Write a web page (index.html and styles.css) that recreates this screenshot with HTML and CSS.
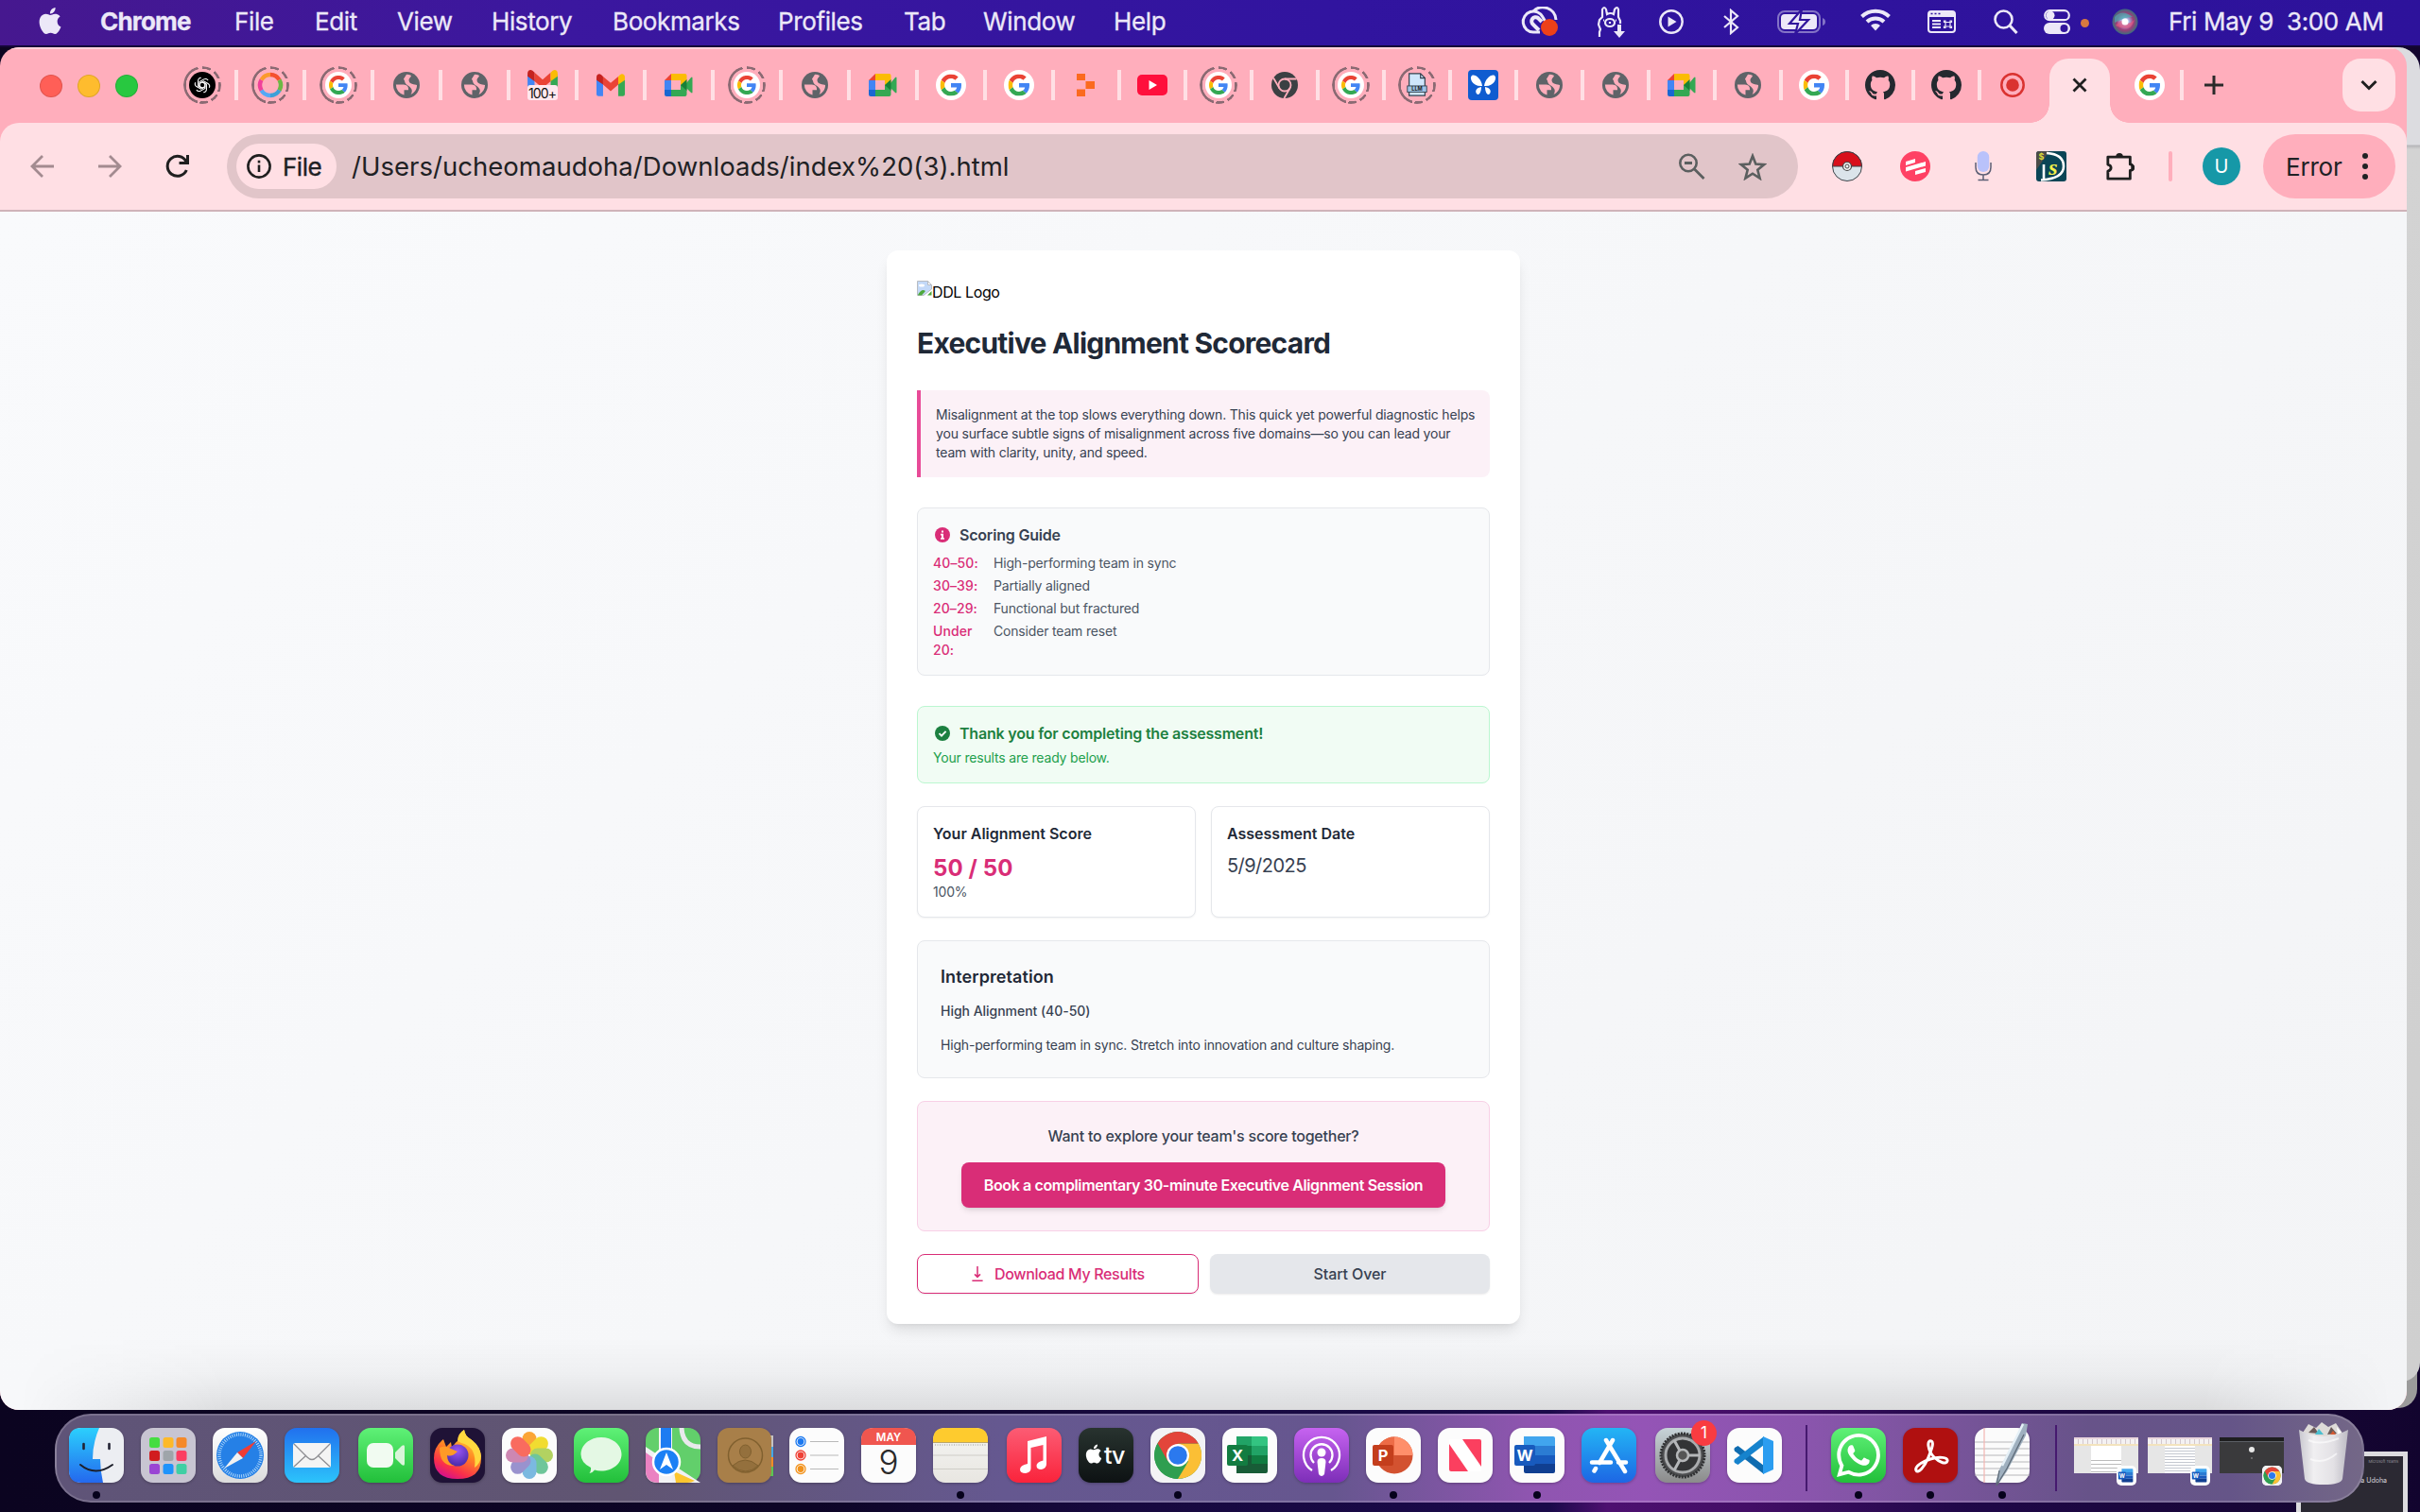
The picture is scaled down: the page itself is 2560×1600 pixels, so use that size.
FILE: index.html
```html
<!DOCTYPE html>
<html lang="en">
<head>
<meta charset="utf-8">
<title>Executive Alignment Scorecard</title>
<link rel="stylesheet" href="styles.css">
</head>
<body>
<svg class="sprite" aria-hidden="true">
  <defs>
    <linearGradient id="gr-blue" x1="0" y1="0" x2="0" y2="1"><stop offset="0" stop-color="#2bd0fd"/><stop offset="1" stop-color="#2468ee"/></linearGradient>
    <linearGradient id="gr-white" x1="0" y1="0" x2="0" y2="1"><stop offset="0" stop-color="#fff"/><stop offset="1" stop-color="#dcdcdc"/></linearGradient>
    <linearGradient id="gr-fox" x1=".8" y1="0" x2=".3" y2="1"><stop offset="0" stop-color="#ffe14d"/><stop offset=".45" stop-color="#ff8a22"/><stop offset=".8" stop-color="#fa2f4b"/><stop offset="1" stop-color="#d6118c"/></linearGradient>
    <radialGradient id="gr-violet" cx=".5" cy=".3" r=".7"><stop offset="0" stop-color="#9a55f5"/><stop offset="1" stop-color="#4a2aa8"/></radialGradient>
    <linearGradient id="gr-can" x1="0" y1="0" x2="1" y2="0"><stop offset="0" stop-color="#c9c8cf"/><stop offset=".3" stop-color="#f0eff1"/><stop offset=".7" stop-color="#e3e1e5"/><stop offset="1" stop-color="#bdbbc4"/></linearGradient>
    <radialGradient id="gr-siri"><stop offset="0" stop-color="#fff"/><stop offset=".3" stop-color="#a9b8e8"/><stop offset=".65" stop-color="#a03d78"/><stop offset="1" stop-color="#3b6f7d"/></radialGradient>
  </defs>

  <symbol id="apple" viewBox="0 0 24 24"><path fill="currentColor" d="M12.152 6.896c-.948 0-2.415-1.078-3.96-1.04-2.04.027-3.91 1.183-4.961 3.014-2.117 3.675-.546 9.103 1.519 12.09 1.013 1.454 2.208 3.09 3.792 3.039 1.52-.065 2.09-.987 3.935-.987 1.831 0 2.35.987 3.96.948 1.637-.026 2.676-1.48 3.676-2.948 1.156-1.688 1.636-3.325 1.662-3.415-.039-.013-3.182-1.221-3.22-4.857-.026-3.04 2.48-4.494 2.597-4.559-1.429-2.09-3.623-2.324-4.39-2.376-2-.156-3.675 1.09-4.61 1.09zM15.53 3.83c.843-1.012 1.4-2.427 1.245-3.83-1.207.052-2.662.805-3.532 1.818-.78.896-1.454 2.338-1.273 3.714 1.338.104 2.715-.688 3.559-1.701"/></symbol>
  <symbol id="m-cloud" viewBox="0 0 40 32"><g fill="none" stroke="currentColor" stroke-width="3"><path d="M21 27H14a11 11 0 1 1 10-16l4 7"/><path d="M14 5a14 14 0 0 1 24 9"/><path d="M20 25l-6-6a4 4 0 0 1 5-7l4 4" stroke-width="4"/></g><circle cx="31" cy="22" r="9" fill="#ee4019"/></symbol>
  <symbol id="m-llama" viewBox="0 0 30 34"><g fill="none" stroke="currentColor" stroke-width="2.2"><path d="M3 33v-5l1-3-2-5 1-5 3-3V4q2-4 4 0l1 5q4-2 7 0l1-5q3-4 4 0v8l2 4v3"/><ellipse cx="14" cy="18" rx="5" ry="4"/><path d="M14 17v2M7 15.500h1M20 15.500h1"/></g><path fill="currentColor" d="M22 20h4v7h4l-6 7-6-7h4z"/></symbol>
  <symbol id="m-play" viewBox="0 0 26 26"><circle cx="13" cy="13" r="11.700" fill="none" stroke="currentColor" stroke-width="2.500"/><path fill="currentColor" d="M9.500 7.500v11l9-5.500z"/></symbol>
  <symbol id="m-bt" viewBox="0 0 18 28"><path d="M2 8l14 12-7 6V2l7 6L2 20" fill="none" stroke="currentColor" stroke-width="2.200"/></symbol>
  <symbol id="m-batt" viewBox="0 0 52 26"><rect x="1" y="2" width="44" height="22" rx="7" fill="none" stroke="currentColor" stroke-opacity=".45" stroke-width="2"/><rect x="4" y="5" width="38" height="16" rx="4" fill="currentColor"/><path d="M48 9q3 1 3 4t-3 4z" fill="currentColor" opacity=".45"/><path d="M26 0L13 15h9l-3 11L33 11h-9z" fill="currentColor" stroke="#30149c" stroke-width="2.200"/></symbol>
  <symbol id="m-wifi" viewBox="0 0 32 25"><g fill="none" stroke="currentColor" stroke-width="4"><path d="M1.500 9.500a21 21 0 0 1 29 0"/><path d="M7 15a13 13 0 0 1 18 0"/></g><path fill="currentColor" d="M11 19a7 7 0 0 1 10 0l-5 5.500z"/></symbol>
  <symbol id="m-app" viewBox="0 0 30 24"><rect x="1" y="1" width="28" height="22" rx="3" fill="none" stroke="currentColor" stroke-width="2"/><path fill="currentColor" d="M1 2h28v5H1z"/><path d="M3.500 3.500h2M7.500 3.500h2M11.500 3.500h2" stroke="#30149c" stroke-width="1.600"/><path d="M5 11h9M5 14.500h9M5 18h9" stroke="currentColor" stroke-width="1.800"/><path d="M19 12.500h5v4.500h-5zM19 12.500h-1.500v-1.500h1.500zM24 12.500v-1.500h1.500v1.500zM19 17v1.500h-1.500V17zM24 17h1.500v1.500H24z" fill="none" stroke="currentColor" stroke-width="1.200"/></symbol>
  <symbol id="m-search" viewBox="0 0 26 26"><circle cx="10.500" cy="10.500" r="9" fill="none" stroke="currentColor" stroke-width="2.600"/><path d="M17 17l7.500 8" stroke="currentColor" stroke-width="3"/></symbol>
  <symbol id="m-toggles" viewBox="0 0 28 26"><rect x="1.200" y="1.200" width="25.600" height="10" rx="5" fill="none" stroke="currentColor" stroke-width="2.200"/><circle cx="7" cy="6.200" r="4.500" fill="currentColor"/><rect y="14" width="28" height="12" rx="6" fill="currentColor"/><circle cx="21.500" cy="20" r="4" fill="#30149c"/></symbol>
  <symbol id="m-siri" viewBox="0 0 28 28"><circle cx="14" cy="14" r="13.500" fill="url(#gr-siri)"/><path d="M3 9q8-9 19 0-9 0-19 6z" fill="#46aeb0" opacity=".7"/><path d="M4 18q7-8 10-4t10-2q-3 9-9 9t-11-3z" fill="#e9557e" opacity=".65"/><circle cx="14" cy="14" r="3.500" fill="#fff"/></symbol>

  <symbol id="f-globe" viewBox="0 0 28 28"><circle cx="14" cy="14" r="14" fill="#5f6368"/><g fill="#ffaebc"><path d="M2.900 13.500H11q5 .3 5 4.500v1.200h-4.500v5.400A11 11 0 0 1 2.900 13.500z"/><path d="M14 2.800q3 0 5 1.200c-.3 2-2.500 2.800-2.500 4.600 0 3.800 3 4.600 8.500 5.400.3 4.500-3 8.500-6.500 10 1-1.800 1.800-4 .8-5.800-1.500-2.500-2.800-3-5.600-5-2-1.500-1-4-2.800-5.400z"/></g></symbol>
  <symbol id="f-g" viewBox="0 0 48 48"><path fill="#ea4335" d="M24 9.500c3.540 0 6.710 1.220 9.210 3.600l6.850-6.850C35.900 2.380 30.470 0 24 0 14.620 0 6.510 5.380 2.560 13.220l7.980 6.190C12.430 13.720 17.740 9.500 24 9.500z"/><path fill="#4285f4" d="M46.980 24.550c0-1.570-.15-3.090-.38-4.550H24v9.020h12.940c-.58 2.960-2.260 5.480-4.780 7.180l7.730 6c4.510-4.180 7.090-10.360 7.090-17.650z"/><path fill="#fbbc05" d="M10.530 28.590c-.48-1.450-.76-2.990-.76-4.590s.27-3.140.76-4.590l-7.980-6.190C.92 16.460 0 20.120 0 24c0 3.880.92 7.540 2.560 10.780l7.970-6.190z"/><path fill="#34a853" d="M24 48c6.480 0 11.930-2.130 15.890-5.810l-7.730-6c-2.150 1.450-4.920 2.300-8.160 2.300-6.260 0-11.570-4.220-13.470-9.910l-7.980 6.190C6.510 42.620 14.620 48 24 48z"/></symbol>
  <symbol id="f-google" viewBox="0 0 32 32"><circle cx="16" cy="16" r="16" fill="#fff"/><use href="#f-g" x="4.500" y="4.500" width="23" height="23"/></symbol>
  <symbol id="f-gpt" viewBox="0 0 28 28"><circle cx="14" cy="14" r="14" fill="#000"/><g fill="none" stroke="#fff" stroke-width="1.100"><path id="petal" d="M14 10.800l2.900 1.600v5l-4.600 2.700a3.200 3.200 0 0 1-4.400-1.200"/><use href="#petal" transform="rotate(60 14 14)"/><use href="#petal" transform="rotate(120 14 14)"/><use href="#petal" transform="rotate(180 14 14)"/><use href="#petal" transform="rotate(240 14 14)"/><use href="#petal" transform="rotate(300 14 14)"/></g></symbol>
  <symbol id="f-ring" viewBox="0 0 28 28"><g fill="none" stroke-width="4.500"><path d="M14 3a11 11 0 0 1 9.500 5.500" stroke="#f5502e"/><path d="M23.500 8.500a11 11 0 0 1 0 11" stroke="#6cb845"/><path d="M23.500 19.500A11 11 0 0 1 14 25" stroke="#3ea0d8"/><path d="M14 25a11 11 0 0 1-9.500-5.500" stroke="#55a8f5"/><path d="M4.500 19.500a11 11 0 0 1 0-11" stroke="#f0409a"/><path d="M4.500 8.500A11 11 0 0 1 14 3" stroke="#fb9a2c"/></g></symbol>
  <symbol id="f-gmail" viewBox="0 0 28 22"><path fill="#4285f4" d="M0 4l6.500 4.500V22H2q-2 0-2-2z"/><path fill="#34a853" d="M28 4l-6.500 4.500V22H26q2 0 2-2z"/><path fill="#ea4335" d="M6.500 2.500L14 9l7.500-6.500v8L14 17l-7.500-6.500z"/><path fill="#c5221f" d="M0 3.500Q0 0 3 0q1.500 0 3.500 2.500v8L0 6z"/><path fill="#fbbc04" d="M28 3.500Q28 0 25 0q-1.500 0-3.500 2.500v8L28 6z"/></symbol>
  <symbol id="f-meet" viewBox="0 0 30 24"><path fill="#ea4335" d="M7 0v7H0z"/><path fill="#fbbc04" d="M7 0h14.500q2 0 2 2v8L17 12V7H7z"/><path fill="#4285f4" d="M0 7h7v10H0z"/><path fill="#1967d2" d="M0 17h7v7H2q-2 0-2-2z"/><path fill="#34a853" d="M7 17h10v-5l6.500-2v12q0 2-2 2H7zM23 10l5-6q1.500-1 1.500.5v15q0 1.500-1.500.5l-5-5z"/><path fill="#188038" d="M17 12l6.500-6v12z"/></symbol>
  <symbol id="f-blocks" viewBox="0 0 20 24"><path fill="#fb6a1f" d="M0 0h9v7H0zM9.500 8H19v8H9.500zM0 16.500h9V24H0z"/></symbol>
  <symbol id="f-yt" viewBox="0 0 32 22"><rect width="32" height="22" rx="5" fill="#ff0f3c"/><path fill="#fff" d="M12.500 6v10l8.500-5z"/></symbol>
  <symbol id="f-chromium" viewBox="0 0 28 28"><circle cx="14" cy="14" r="14" fill="#3c4043"/><g stroke="#ffaebc" stroke-width="1.800" fill="none"><circle cx="14" cy="14" r="6.500"/><path d="M14 7.500h12.500M8.400 17.300L2.100 6.500M19.600 17.300L13.400 28"/></g></symbol>
  <symbol id="f-llm" viewBox="0 0 24 28"><path d="M3 1h13l5 5v20H3z" fill="#cfe6fb" stroke="#33414e" stroke-width="1.300"/><path d="M16 1v5h5" fill="none" stroke="#33414e" stroke-width="1.300"/><rect x="1" y="15" width="22" height="7" fill="#9fc4e6" stroke="#33414e"/></symbol>
  <symbol id="f-fly" viewBox="0 0 32 32"><rect width="32" height="32" rx="4" fill="#0f5cd0"/><g fill="#fff"><path d="M15 17C14 9 7 4 4 6s0 12 11 11z"/><path d="M17 17c1-8 8-13 11-11s0 12-11 11z"/><path d="M14 18c-5 1-7 4-5 7s5-1 5-7zM18 18c5 1 7 4 5 7s-5-1-5-7z"/></g></symbol>
  <symbol id="f-gh" viewBox="0 0 16 16"><path fill="#24292f" d="M8 0C3.580 0 0 3.580 0 8c0 3.540 2.290 6.530 5.470 7.590.4.070.55-.17.55-.38 0-.19-.01-.82-.01-1.490-2.010.37-2.530-.49-2.690-.94-.09-.23-.48-.94-.82-1.130-.28-.15-.68-.52-.01-.53.63-.01 1.080.58 1.230.82.72 1.210 1.870.87 2.330.66.07-.52.28-.87.51-1.070-1.780-.2-3.640-.89-3.640-3.950 0-.87.31-1.590.82-2.150-.08-.2-.36-1.020.08-2.120 0 0 .67-.21 2.200.82.64-.18 1.320-.27 2-.27.68 0 1.360.09 2 .27 1.530-1.040 2.200-.82 2.200-.82.44 1.100.16 1.920.08 2.120.51.56.82 1.270.82 2.150 0 3.070-1.870 3.750-3.650 3.950.29.25.54.73.54 1.480 0 1.070-.01 1.930-.01 2.200 0 .21.15.46.55.38A8.013 8.013 0 0 0 16 8c0-4.420-3.580-8-8-8z"/></symbol>
  <symbol id="f-rec" viewBox="0 0 26 26"><circle cx="13" cy="13" r="11.700" fill="none" stroke="#da3230" stroke-width="2.500"/><circle cx="13" cy="13" r="6.800" fill="#da3230"/></symbol>

  <symbol id="t-back" viewBox="0 0 26 24"><path d="M25 12H2M13 1L2 12l11 11" fill="none" stroke="currentColor" stroke-width="2.800"/></symbol>
  <symbol id="t-reload" viewBox="0 0 26 26"><path d="M22.300 17A10.500 10.500 0 1 1 22 8" fill="none" stroke="#1f1f1f" stroke-width="3"/><path d="M25 1v10H14.500V8H22V1z" fill="#1f1f1f"/></symbol>
  <symbol id="t-info" viewBox="0 0 26 26"><circle cx="13" cy="13" r="11.600" fill="none" stroke="#1f1f1f" stroke-width="2.600"/><path d="M13 11.500V19M13 6.800v2.600" stroke="#1f1f1f" stroke-width="2.600"/></symbol>
  <symbol id="t-zoom" viewBox="0 0 28 28"><circle cx="10" cy="10.500" r="8.700" fill="none" stroke="#5b5f5f" stroke-width="2.600"/><path d="M6 10.500h8M16.500 17l10 10" stroke="#5b5f5f" stroke-width="2.800"/></symbol>
  <symbol id="t-star" viewBox="0 0 30 29"><path d="M15 3l3.300 8.500 9 .6-7 5.700 2.300 8.800L15 21.700l-7.600 4.900 2.300-8.800-7-5.700 9-.6z" fill="none" stroke="#5b5f5f" stroke-width="2.600"/></symbol>
  <symbol id="t-ball" viewBox="0 0 32 32"><circle cx="16" cy="16" r="15.500" fill="#dbe4ea" stroke="#3c4248"/><path d="M.5 16a15.500 15.500 0 0 1 31 0z" fill="#d80f1b" stroke="#3c4248"/><circle cx="16" cy="16" r="4.500" fill="#eee" stroke="#444" stroke-width="1.200"/><circle cx="16" cy="16" r="2" fill="#fff" stroke="#444"/></symbol>
  <symbol id="t-stripes" viewBox="0 0 32 32"><circle cx="16" cy="16" r="16" fill="#ff4164"/><path d="M6 11l10-3v4L6 15zM6 17l21-6v4.500L6 21.500zM16 21l11-3v4l-11 3z" fill="#fff"/></symbol>
  <symbol id="t-mic" viewBox="0 0 18 32"><rect x="2.800" width="12.400" height="22" rx="6.200" fill="#b9c2fb"/><path d="M1 12v5q0 8 8 8t8-8v-5M9 25v5M3.500 30.500h11" fill="none" stroke="#5d5f75" stroke-width="1.500"/></symbol>
  <symbol id="t-js" viewBox="0 0 32 32"><rect width="32" height="32" rx="3" fill="#0a4556"/><path d="M0 3q0-3 3-3h11L0 20z" fill="#4b4b48"/><path d="M11 2q18 1 18 14T5 30.500M8 14v16" fill="none" stroke="#fff" stroke-width="2.600"/></symbol>
  <symbol id="t-puzzle" viewBox="0 0 34 34"><path d="M3 6.500h25v8.300a3.400 3.400 0 0 1 0 7V31H3v-8.500q3.500-1 3.500-3.800T3 15z" fill="none" stroke="#1f1f1f" stroke-width="3" stroke-linejoin="round"/><path d="M12 6a4 4 0 0 1 8 0zM29 14.500a4 4 0 0 1 0 8z" fill="#1f1f1f"/></symbol>

  <symbol id="i-broken" viewBox="0 0 16 16"><path d="M.5.500h11l4 4V9L7 15.500H.5z" fill="#c3d9f8" stroke="#b8bcc2"/><path d="M11.500.500v4h4z" fill="#fff" stroke="#b8bcc2"/><ellipse cx="5" cy="5" rx="3" ry="1.500" fill="#fff"/><path d="M1 15q4-7 8-4l-4 4.500H1z" fill="#4ea83b"/><path d="M15.500 11v4.500H11z" fill="#4ea83b"/></symbol>
  <symbol id="i-info" viewBox="0 0 16 16"><circle cx="8" cy="8" r="8" fill="#d92d77"/><path d="M7 3.500h2v2H7zM6 6.800h3v4.400h1v1.600H6v-1.600h1V8.400H6z" fill="#fff"/></symbol>
  <symbol id="i-check" viewBox="0 0 16 16"><circle cx="8" cy="8" r="8" fill="#1c8040"/><path d="M4.500 8.200L7 10.700l4.600-4.900" fill="none" stroke="#fff" stroke-width="1.900"/></symbol>
  <symbol id="i-download" viewBox="0 0 14 20"><path d="M7 0v14M3.300 10.500L7 14.200l3.700-3.700M0 19h14" fill="none" stroke="currentColor" stroke-width="1.900"/></symbol>

  <symbol id="d-finder" viewBox="0 0 58 58"><rect width="58" height="58" rx="13" fill="#eceef2"/><path d="M13 0h19q-7 16-7 33h8q0 12 3 25H13Q0 58 0 45V13Q0 0 13 0z" fill="url(#gr-blue)"/><path d="M15.500 17v5M42.500 17v5" stroke="#223" stroke-width="2.600" stroke-linecap="round"/><path d="M12 39q16 13 34 0" fill="none" stroke="#1c1f2a" stroke-width="2" stroke-linecap="round"/></symbol>
  <symbol id="d-launch" viewBox="0 0 58 58"><rect width="58" height="58" rx="13" fill="#c8c5d2"/><rect x="9" y="10" width="11" height="11" rx="2.500" fill="#45dd42"/><rect x="23.500" y="10" width="11" height="11" rx="2.500" fill="#fdb92a"/><rect x="37.500" y="10" width="11" height="11" rx="2.500" fill="#f5892a"/><rect x="9" y="24" width="11" height="11" rx="2.500" fill="#d11c1f"/><rect x="23.500" y="24" width="11" height="11" rx="2.500" fill="#9fa5aa"/><rect x="37.500" y="24" width="11" height="11" rx="2.500" fill="#fc3e62"/><rect x="9" y="38" width="11" height="11" rx="2.500" fill="#9a45d4"/><rect x="23.500" y="38" width="11" height="11" rx="2.500" fill="#1f93fb"/><rect x="37.500" y="38" width="11" height="11" rx="2.500" fill="#3fcfa4"/></symbol>
  <symbol id="d-safari" viewBox="0 0 58 58"><rect width="58" height="58" rx="13" fill="url(#gr-white)"/><circle cx="29" cy="29" r="25" fill="#2580e6"/><circle cx="29" cy="29" r="22" fill="none" stroke="#b7dcfb" stroke-width="3.500" stroke-dasharray=".9 1.400"/><path d="M46 14L26 26l6 6z" fill="#f03c34"/><path d="M12 43l14-17 6 6z" fill="#f2f2f2"/></symbol>
  <symbol id="d-mail" viewBox="0 0 58 58"><rect x="9" y="16" width="40" height="26" rx="2.500" fill="#f4f4f4"/><path d="M10 17l14 14q5 5 10 0l14-14M10 41l13-12M48 41L35 29" fill="none" stroke="#8e8e92" stroke-width="1.300"/></symbol>
  <symbol id="d-facetime" viewBox="0 0 58 58"><rect x="9" y="16" width="28" height="26" rx="7" fill="#f1fbf1"/><path d="M39 26l7-7q3-2 3 1v18q0 3-3 1l-7-7z" fill="#d9f5da"/></symbol>
  <symbol id="d-firefox" viewBox="0 0 58 58"><path d="M14 12l3 8 5-5 1 6q4-6 6-7 0-8 7-12 1 7 7 10 11 8 11 20 0 22-25 22T4 32q0-12 10-20z" fill="url(#gr-fox)"/><path d="M29 14q1-8 7-12 1 7 7 10 10 7 11 18-1 8-7 12 3-22-14-26z" fill="#ffd83f"/><circle cx="29" cy="29" r="11.500" fill="url(#gr-violet)"/><path d="M10 21q6-3 12 1l7 3q-6 6-11 4 0 9 8 11-16 1-16-19z" fill="#ff9a26"/></symbol>
  <symbol id="d-photos" viewBox="0 0 58 58"><g opacity=".88"><rect x="21.500" y="4" width="15" height="24" rx="7.500" fill="#fb9a1c"/><rect x="21.500" y="4" width="15" height="24" rx="7.500" fill="#f0d816" transform="rotate(45 29 29)"/><rect x="21.500" y="4" width="15" height="24" rx="7.500" fill="#a8cd4c" transform="rotate(90 29 29)"/><rect x="21.500" y="4" width="15" height="24" rx="7.500" fill="#5cbf8d" transform="rotate(135 29 29)"/><rect x="21.500" y="4" width="15" height="24" rx="7.500" fill="#6ab0dd" transform="rotate(180 29 29)"/><rect x="21.500" y="4" width="15" height="24" rx="7.500" fill="#8c84c8" transform="rotate(225 29 29)"/><rect x="21.500" y="4" width="15" height="24" rx="7.500" fill="#c777a8" transform="rotate(270 29 29)"/><rect x="21.500" y="4" width="15" height="24" rx="7.500" fill="#f9584a" transform="rotate(315 29 29)"/></g></symbol>
  <symbol id="d-messages" viewBox="0 0 58 58"><path d="M29 10c12 0 21.500 8 21.500 18S41 45.500 29 45.500q-4 0-7-1-2 3-5.500 3.500 2-3 1.500-6Q7.500 37 7.500 28C7.500 18 17 10 29 10z" fill="#e4f8e4"/></symbol>
  <symbol id="d-maps" viewBox="0 0 58 58"><rect width="58" height="58" rx="13" fill="#62cf6b"/><path d="M0 20l58 38H13Q0 58 0 45z" fill="#f1f1f3"/><path d="M0 26l14 10v22Q0 58 0 45z" fill="#ea82c2"/><path d="M30 46l22 10q-4 2-8 2H32z" fill="#fdc62f"/><path d="M14 0h14v58H14z" fill="#f3f3f5"/><path d="M16 0h11v30H16z" fill="#1d7cf2"/><path d="M38 0q1 20 20 20" fill="none" stroke="#e9e9ec" stroke-width="5"/><circle cx="22" cy="36" r="14" fill="#1b80f5" stroke="#fff" stroke-width="2.500"/><path d="M22 26l7 18-7-5-7 5z" fill="#fff"/></symbol>
  <symbol id="d-contacts" viewBox="0 0 60 58"><path d="M50 8h9v12h-9z" fill="#c5c3c4"/><path d="M50 20h9v11h-9z" fill="#44a8e8"/><path d="M50 31h9v10h-9z" fill="#f58c27"/><path d="M50 41h9v10h-9z" fill="#5bc553"/><rect width="57" height="58" rx="12" fill="#a87f49"/><g fill="#94703d" stroke="#80602f"><circle cx="29.500" cy="29" r="18" fill="none" stroke-width="1.500"/><ellipse cx="29.500" cy="25" rx="6" ry="7"/><path d="M16 40q13-12 27 0-13 12-27 0z"/></g></symbol>
  <symbol id="d-reminders" viewBox="0 0 58 58"><g fill="none" stroke-width="1.300"><circle cx="12" cy="14.500" r="5" stroke="#1b78f0"/><circle cx="12" cy="29" r="5" stroke="#ef4136"/><circle cx="12" cy="43.500" r="5" stroke="#f2921b"/></g><circle cx="12" cy="14.500" r="3.400" fill="#1b78f0"/><circle cx="12" cy="29" r="3.400" fill="#ef4136"/><circle cx="12" cy="43.500" r="3.400" fill="#f2921b"/><path d="M22 14.500h30M22 29h30M22 43.500h30" stroke="#b9b9b9" stroke-width="1"/></symbol>
  <symbol id="d-calendar" viewBox="0 0 58 58"><path d="M0 18v-5Q0 0 13 0h32q13 0 13 13v5z" fill="#f0564f"/></symbol>
  <symbol id="d-notes" viewBox="0 0 58 58"><path d="M0 15v-2Q0 0 13 0h32q13 0 13 13v2z" fill="#fecb2e"/><path d="M0 15.500h58" stroke="#b9a66c"/><path d="M2 18h54" stroke="#999" stroke-dasharray="1 1.500"/><path d="M0 29h58M0 43.500h58" stroke="#cfcdc8"/></symbol>
  <symbol id="d-music" viewBox="0 0 58 58"><path d="M22 14l20-5v29q0 5-5.500 6-5 0-5-4 0-4 7-5.500V18l-13 3v22q0 4-5.500 5-6 0-6-4 0-4.500 8-6z" fill="#fff"/></symbol>
  <symbol id="d-chrome" viewBox="0 0 58 58"><rect width="58" height="58" rx="13" fill="#f3f3f5"/><circle cx="29" cy="29" r="25" fill="#2f9e50"/><path d="M29 29V16.500h21.700A25 25 0 0 1 28 54l12-18.500z" fill="#fbbf35"/><path d="M29 29l-11 6L7.500 16.500a25 25 0 0 1 43.200 0H29z" fill="#e3453a"/><path d="M29 54a25 25 0 0 1-21.500-37.500L18.200 35.300 29 41l9-2z" fill="#2f9e50"/><circle cx="29" cy="29" r="12" fill="#fff"/><circle cx="29" cy="29" r="9.800" fill="#2b79ee"/></symbol>
  <symbol id="d-excel" viewBox="0 0 58 58"><path fill="#21a366" d="M15 9h16v10H15z"/><path fill="#33c481" d="M31 9h15q2 0 2 2v8H31z"/><path fill="#107c41" d="M15 19h16v10H15z"/><path fill="#21a366" d="M31 19h17v10H31z"/><path fill="#185c37" d="M15 29h16v9H15zM15 38h33v8q0 2-2 2H15z"/><path fill="#107c41" d="M31 29h17v9H31z"/><rect x="5" y="18" width="22" height="22" rx="2" fill="#127c41"/></symbol>
  <symbol id="d-podcast" viewBox="0 0 58 58"><g fill="none" stroke="#fff" stroke-width="2.300"><path d="M19 45a19 19 0 1 1 20 0"/><path d="M21 37a11.500 11.500 0 1 1 16 0"/></g><circle cx="29" cy="26" r="4.500" fill="#fff"/><path d="M24.500 36q0-4 4.500-4t4.500 4L32 49q-3 4-6 0z" fill="#fff"/></symbol>
  <symbol id="d-ppt" viewBox="0 0 58 58"><circle cx="30" cy="29" r="19.500" fill="#d35230"/><path d="M30 9.500A19.500 19.500 0 0 1 49.500 29H30z" fill="#ff8f6b"/><path d="M30 9.500V29H10.500A19.500 19.500 0 0 1 30 9.500z" fill="#ed6c47"/><rect x="7" y="18" width="22" height="22" rx="2" fill="#c43e1c"/></symbol>
  <symbol id="d-news" viewBox="0 0 58 58"><rect x="12" y="12" width="34" height="34" rx="2" fill="#fb3f5f"/><path d="M12 12h14l20 29v5H32L12 17z" fill="#fff"/></symbol>
  <symbol id="d-word" viewBox="0 0 58 58"><path fill="#41a5ee" d="M15 9h31q2 0 2 2v8H15z"/><path fill="#2b7cd3" d="M15 19h33v10H15z"/><path fill="#185abd" d="M15 29h33v9H15z"/><path fill="#103f91" d="M15 38h33v8q0 2-2 2H17q-2 0-2-2z"/><rect x="5" y="18" width="22" height="22" rx="2" fill="#185abd"/></symbol>
  <symbol id="d-store" viewBox="0 0 58 58"><g stroke="#fff" stroke-width="4.500" stroke-linecap="round"><path d="M33 13L19 37M26 13l20 33M11 36.500h20M39 36.500h8M15 43l-1.500 2.500"/></g></symbol>
  <symbol id="d-settings" viewBox="0 0 58 58"><circle cx="29" cy="29" r="23" fill="#4d4e50" stroke="#2f3032" stroke-width="3" stroke-dasharray="2 1.200"/><circle cx="29" cy="29" r="18" fill="#333436" stroke="#a9abad" stroke-width="3"/><circle cx="29" cy="29" r="6" fill="#555" stroke="#b5b7b9" stroke-width="2.500"/><path d="M35 29h12M26 24l-6-11M26 34l-6 11" stroke="#b5b7b9" stroke-width="3"/></symbol>
  <symbol id="d-code" viewBox="0 0 58 58"><path d="M8 21l3.500-2L39 40v9L8 24.500q-1.200-1.800 0-3.500z" fill="#0f6cb0"/><path d="M8 37l3.500 2L39 18V9L8 33.500q-1.200 1.800 0 3.500z" fill="#1683cd"/><path d="M38 9l11 5v30l-11 5z" fill="#2b9df0"/></symbol>
  <symbol id="d-whatsapp" viewBox="0 0 24 24"><path fill="#fff" d="M17.472 14.382c-.297-.149-1.758-.867-2.030-.967-.273-.099-.471-.148-.67.15-.197.297-.767.966-.94 1.164-.173.199-.347.223-.644.075-.297-.15-1.255-.463-2.390-1.475-.883-.788-1.480-1.761-1.653-2.059-.173-.297-.018-.458.13-.606.134-.133.298-.347.446-.52.149-.174.198-.298.298-.497.099-.198.05-.371-.025-.52-.075-.149-.669-1.612-.916-2.207-.242-.579-.487-.5-.669-.51-.173-.008-.371-.01-.57-.01-.198 0-.52.074-.792.372-.272.297-1.040 1.016-1.040 2.479 0 1.462 1.065 2.875 1.213 3.074.149.198 2.096 3.200 5.077 4.487.709.306 1.262.489 1.694.625.712.227 1.360.195 1.871.118.571-.085 1.758-.719 2.006-1.413.248-.694.248-1.289.173-1.413-.074-.124-.272-.198-.57-.347m-5.421 7.403h-.004a9.870 9.870 0 0 1-5.031-1.378l-.361-.214-3.741.982.998-3.648-.235-.374a9.860 9.860 0 0 1-1.510-5.260c.001-5.450 4.436-9.884 9.888-9.884 2.640 0 5.122 1.030 6.988 2.898a9.825 9.825 0 0 1 2.893 6.994c-.003 5.450-4.437 9.884-9.885 9.884m8.413-18.297A11.815 11.815 0 0 0 12.050 0C5.495 0 .16 5.335.157 11.892c0 2.096.547 4.142 1.588 5.945L.057 24l6.305-1.654a11.882 11.882 0 0 0 5.683 1.448h.005c6.554 0 11.890-5.335 11.893-11.893a11.821 11.821 0 0 0-3.480-8.413z"/></symbol>
  <symbol id="d-acrobat" viewBox="0 0 58 58"><path d="M30 14c-5-2-4 10 3 17 6 6 13 8 14 4s-9-5-18-2-17 8-15 12 9-4 13-14 6-16 3-17z" fill="none" stroke="#fff" stroke-width="3"/></symbol>
  <symbol id="d-textedit" viewBox="0 0 64 72"><rect y="7" width="58" height="58" rx="13" fill="#fbfbfb"/><path d="M0 22h58M0 29h58M0 36h58M0 43h58M0 50h58M0 57h58" stroke="#b7b7b9" stroke-width="1.200"/><path d="M10 7v58" stroke="#f4b6b2" stroke-width="1.200"/><path d="M50 2l6 1-2 12-20 38-9 13-3-1 4-14L46 12z" fill="#9fb0bf"/><path d="M51 3l-22 44" stroke="#e6f1f8" stroke-width="2.500"/><path d="M52 14L34 50l-11 18 3-16" fill="none" stroke="#5f6b78" stroke-width="1.300"/></symbol>
  <symbol id="d-trash" viewBox="0 0 52 68"><path d="M4 12l6-9 8 4 6-6 7 5 8-4 8 12-6 5H9z" fill="#dedbd8"/><path d="M10 12l6-6 5 7zM30 14l4-8 6 7z" fill="#6b5a58"/><path d="M17 14l4-6 5 6z" fill="#4bbfd0"/><path d="M33 14l3-4 3 4z" fill="#d65a34"/><path d="M40 6l5 6-4 2z" fill="#fff"/><path d="M0 9q26 14 52 0l-6 52q-2 6-20 6T6 61z" fill="url(#gr-can)"/><path d="M10 20q12 6 32-2M12 40q14 6 28-6" fill="none" stroke="#fff" stroke-opacity=".6" stroke-width="2"/></symbol>
</svg>

<div class="desktop">
  <header class="menubar">
    <svg class="menubar-apple"><use href="#apple"/></svg>
    <nav class="menus"><b>Chrome</b><span>File</span><span>Edit</span><span>View</span><span>History</span><span>Bookmarks</span><span>Profiles</span><span>Tab</span><span>Window</span><span>Help</span></nav>
    <div class="status">
      <svg class="s-cloud"><use href="#m-cloud"/></svg>
      <svg class="s-llama"><use href="#m-llama"/></svg>
      <svg class="s-play"><use href="#m-play"/></svg>
      <svg class="s-bt"><use href="#m-bt"/></svg>
      <svg class="s-batt"><use href="#m-batt"/></svg>
      <svg class="s-wifi"><use href="#m-wifi"/></svg>
      <svg class="s-app"><use href="#m-app"/></svg>
      <svg class="s-search"><use href="#m-search"/></svg>
      <svg class="s-toggles"><use href="#m-toggles"/></svg>
      <i class="s-dot"></i>
      <svg class="s-siri"><use href="#m-siri"/></svg>
      <span class="clock">Fri May 9&nbsp; 3:00 AM</span>
    </div>
  </header>

  <div class="back-window back-window-far"></div>
  <div class="back-window back-window-near"></div>
  <div class="video-tile"><small>Microsoft Teams</small><span>oma Udoha</span></div>

  <main class="window">
    <div class="tabstrip">
      <div class="lights"><i class="red"></i><i class="amber"></i><i class="green"></i></div>
      <div class="tabs">
        <div class="tab asleep"><svg class="f28"><use href="#f-gpt"/></svg></div>
        <div class="tab asleep"><svg class="f28"><use href="#f-ring"/></svg></div>
        <div class="tab asleep"><svg class="f28"><use href="#f-google"/></svg></div>
        <div class="tab"><svg class="f28"><use href="#f-globe"/></svg></div>
        <div class="tab"><svg class="f28"><use href="#f-globe"/></svg></div>
        <div class="tab"><svg class="f32" viewBox="0 0 32 32"><use href="#f-gmail" width="32" height="25"/><rect y="16" width="32" height="16" rx="3" fill="#ffe8ee"/><text class="count" x="15.600" y="29.500">100+</text></svg></div>
        <div class="tab"><svg class="f30"><use href="#f-gmail"/></svg></div>
        <div class="tab"><svg class="f30"><use href="#f-meet"/></svg></div>
        <div class="tab asleep"><svg class="f28"><use href="#f-google"/></svg></div>
        <div class="tab"><svg class="f28"><use href="#f-globe"/></svg></div>
        <div class="tab"><svg class="f30"><use href="#f-meet"/></svg></div>
        <div class="tab"><svg class="f32"><use href="#f-google"/></svg></div>
        <div class="tab"><svg class="f32"><use href="#f-google"/></svg></div>
        <div class="tab narrow"><svg class="f24"><use href="#f-blocks"/></svg></div>
        <div class="tab narrow"><svg class="f32"><use href="#f-yt"/></svg></div>
        <div class="tab narrow asleep"><svg class="f28"><use href="#f-google"/></svg></div>
        <div class="tab narrow"><svg class="f28"><use href="#f-chromium"/></svg></div>
        <div class="tab narrow asleep"><svg class="f28"><use href="#f-google"/></svg></div>
        <div class="tab narrow asleep"><svg class="f26" viewBox="0 0 24 28"><use href="#f-llm" width="24" height="28"/><text class="llm" x="12" y="20.800">LLM</text></svg></div>
        <div class="tab narrow"><svg class="f32"><use href="#f-fly"/></svg></div>
        <div class="tab narrow"><svg class="f28"><use href="#f-globe"/></svg></div>
        <div class="tab narrow"><svg class="f28"><use href="#f-globe"/></svg></div>
        <div class="tab narrow"><svg class="f30"><use href="#f-meet"/></svg></div>
        <div class="tab narrow"><svg class="f28"><use href="#f-globe"/></svg></div>
        <div class="tab narrow"><svg class="f32"><use href="#f-google"/></svg></div>
        <div class="tab narrow"><svg class="f32"><use href="#f-gh"/></svg></div>
        <div class="tab narrow"><svg class="f32"><use href="#f-gh"/></svg></div>
        <div class="tab narrow last"><svg class="f26"><use href="#f-rec"/></svg></div>
        <div class="tab-active"><svg class="close" viewBox="0 0 16 16"><path d="M1.500 1.500l13 13M14.500 1.500l-13 13" stroke="#1f1f1f" stroke-width="2.800"/></svg></div>
        <div class="tab after-active"><svg class="f32"><use href="#f-google"/></svg></div>
      </div>
      <svg class="new-tab" viewBox="0 0 20 20"><path d="M10 0v20M0 10h20" stroke="#2a2a2a" stroke-width="3"/></svg>
      <div class="tab-search"><svg class="chevron" viewBox="0 0 18 12"><path d="M1.500 2L9 9.500 16.500 2" fill="none" stroke="#1f1f1f" stroke-width="3"/></svg></div>
    </div>

    <div class="toolbar">
      <svg class="nav-btn"><use href="#t-back"/></svg>
      <svg class="nav-btn forward"><use href="#t-back"/></svg>
      <svg class="nav-btn reload"><use href="#t-reload"/></svg>
      <div class="omnibox">
        <div class="chip"><svg class="chip-icon"><use href="#t-info"/></svg><span>File</span></div>
        <span class="url">/Users/ucheomaudoha/Downloads/index%20(3).html</span>
        <svg class="o-zoom"><use href="#t-zoom"/></svg>
        <svg class="o-star"><use href="#t-star"/></svg>
      </div>
      <div class="extensions">
        <svg class="ext"><use href="#t-ball"/></svg>
        <svg class="ext"><use href="#t-stripes"/></svg>
        <svg class="ext"><use href="#t-mic"/></svg>
        <svg class="ext" viewBox="0 0 32 32"><use href="#t-js" width="32" height="32"/><text class="js-s" x="18" y="25">s</text><text class="js-dollar" x="5.500" y="9">$</text></svg>
        <svg class="ext"><use href="#t-puzzle"/></svg>
      </div>
      <i class="tool-sep"></i>
      <div class="avatar">U</div>
      <div class="error-pill"><span>Error</span><i class="dots"></i></div>
    </div>

    <div class="page">
      <article class="card">
        <div class="logo"><svg class="broken"><use href="#i-broken"/></svg><span>DDL Logo</span></div>
        <h1>Executive Alignment Scorecard</h1>
        <p class="intro">Misalignment at the top slows everything down. This quick yet powerful diagnostic helps<br>you surface subtle signs of misalignment across five domains—so you can lead your<br>team with clarity, unity, and speed.</p>

        <section class="guide">
          <h2 class="with-icon"><svg><use href="#i-info"/></svg>Scoring Guide</h2>
          <dl>
            <dt>40–50:</dt><dd>High-performing team in sync</dd>
            <dt>30–39:</dt><dd>Partially aligned</dd>
            <dt>20–29:</dt><dd>Functional but fractured</dd>
            <dt>Under 20:</dt><dd>Consider team reset</dd>
          </dl>
        </section>

        <section class="thanks">
          <h2 class="with-icon"><svg><use href="#i-check"/></svg>Thank you for completing the assessment!</h2>
          <p>Your results are ready below.</p>
        </section>

        <div class="stats">
          <section class="stat"><h3>Your Alignment Score</h3><p class="score">50 / 50</p><p class="percent">100%</p></section>
          <section class="stat"><h3>Assessment Date</h3><p class="date">5/9/2025</p></section>
        </div>

        <section class="interpretation">
          <h2>Interpretation</h2>
          <p class="level">High Alignment (40-50)</p>
          <p>High-performing team in sync. Stretch into innovation and culture shaping.</p>
        </section>

        <section class="cta">
          <p>Want to explore your team's score together?</p>
          <a class="book">Book a complimentary 30-minute Executive Alignment Session</a>
        </section>

        <div class="actions">
          <a class="btn download"><svg><use href="#i-download"/></svg>Download My Results</a>
          <a class="btn restart">Start Over</a>
        </div>
      </article>
    </div>
  </main>

  <footer class="dock">
    <div class="app running"><svg><use href="#d-finder"/></svg></div>
    <div class="app"><svg><use href="#d-launch"/></svg></div>
    <div class="app"><svg><use href="#d-safari"/></svg></div>
    <div class="app bg-mail"><svg><use href="#d-mail"/></svg></div>
    <div class="app bg-green nudge"><svg><use href="#d-facetime"/></svg></div>
    <div class="app bg-fox"><svg><use href="#d-firefox"/></svg></div>
    <div class="app bg-white"><svg><use href="#d-photos"/></svg></div>
    <div class="app bg-green"><svg><use href="#d-messages"/></svg></div>
    <div class="app"><svg><use href="#d-maps"/></svg></div>
    <div class="app"><svg class="contacts"><use href="#d-contacts"/></svg></div>
    <div class="app bg-white"><svg><use href="#d-reminders"/></svg></div>
    <div class="app bg-white"><svg viewBox="0 0 58 58"><use href="#d-calendar" width="58" height="58"/><text class="cal-month" x="29" y="14">MAY</text><text class="cal-day" x="29" y="48.500">9</text></svg></div>
    <div class="app bg-paper running"><svg><use href="#d-notes"/></svg></div>
    <div class="app bg-music nudge"><svg><use href="#d-music"/></svg></div>
    <div class="app bg-tv"><svg viewBox="0 0 58 58"><use href="#apple" x="6" y="17" width="20" height="21"/><text class="tv" x="27" y="38">tv</text></svg></div>
    <div class="app running"><svg><use href="#d-chrome"/></svg></div>
    <div class="app bg-white"><svg viewBox="0 0 58 58"><use href="#d-excel" width="58" height="58"/><text class="office" x="16" y="35">X</text></svg></div>
    <div class="app bg-podcast"><svg><use href="#d-podcast"/></svg></div>
    <div class="app bg-white running"><svg viewBox="0 0 58 58"><use href="#d-ppt" width="58" height="58"/><text class="office" x="18" y="35">P</text></svg></div>
    <div class="app bg-white"><svg><use href="#d-news"/></svg></div>
    <div class="app bg-white running"><svg viewBox="0 0 58 58"><use href="#d-word" width="58" height="58"/><text class="office" x="16" y="35">W</text></svg></div>
    <div class="app bg-store"><svg><use href="#d-store"/></svg></div>
    <div class="app bg-settings nudge"><svg><use href="#d-settings"/></svg><b class="badge">1</b></div>
    <div class="app bg-white"><svg><use href="#d-code"/></svg></div>
    <i class="divider"></i>
    <div class="app bg-green running"><svg class="inset"><use href="#d-whatsapp"/></svg></div>
    <div class="app bg-acrobat running"><svg><use href="#d-acrobat"/></svg></div>
    <div class="app running"><svg class="textedit"><use href="#d-textedit"/></svg></div>
    <i class="divider divider-two"></i>
    <div class="thumb"><i class="ribbon"></i><i class="sheet"></i><span class="thumb-app"><svg viewBox="0 0 58 58"><use href="#d-word" width="58" height="58"/><text class="office" x="16" y="35">W</text></svg></span></div>
    <div class="thumb second"><i class="ribbon"></i><i class="sheet filled"></i><span class="thumb-app"><svg viewBox="0 0 58 58"><use href="#d-word" width="58" height="58"/><text class="office" x="16" y="35">W</text></svg></span></div>
    <div class="thumb dark"><i class="bar"></i><i class="logo-dot"></i><span class="thumb-app"><svg><use href="#d-chrome"/></svg></span></div>
    <svg class="trash"><use href="#d-trash"/></svg>
  </footer>
</div>
</body>
</html>
```
FILE: styles.css
```css
* { box-sizing: border-box; }
body { margin: 0; font-family: Inter, "Liberation Sans", sans-serif; }
h1, h2, h3, p, dl, dd { margin: 0; }
svg { display: block; flex: none; overflow: visible; }
.sprite { position: absolute; width: 0; height: 0; overflow: hidden; }

.desktop {
  position: relative;
  width: 2560px;
  height: 1600px;
  overflow: hidden;
  display: flex;
  flex-direction: column;
  background: linear-gradient(90deg, #0b0420 0, #0d0526 850px, #17093f 1200px, #1a0a4a 1640px, #4d1070 1700px, #430e66 1850px, #1f0848 2080px, #170636 2400px, #12042e 2560px);
}

/* Menu bar */
.menubar {
  height: 50px;
  flex: none;
  display: flex;
  align-items: center;
  padding: 0 0 3px 39px;
  background: linear-gradient(90deg, #46188f 0, #3b179f 600px, #31149f 1400px, #2d129b 2560px);
  border-bottom: 2px solid #140638;
  color: #ece8f8;
  font-size: 26px;
  white-space: nowrap;
}
.menubar-apple { width: 28px; height: 32px; margin-top: -2px; }
.menus {
  display: grid;
  grid-template-columns: 142px 85px 87px 100px 128px 175px 133px 84px 138px 61px;
  margin-left: 39px;
  letter-spacing: -.38px;
  -webkit-text-stroke: .3px currentColor;
}
.menus b { font-weight: 700; letter-spacing: -.8px; }
.status { display: flex; align-items: center; margin-left: 369px; }
.s-cloud { width: 40px; height: 32px; }
.s-llama { width: 30px; height: 34px; margin-left: 41px; }
.s-play { width: 26px; height: 26px; margin-left: 36px; }
.s-bt { width: 18px; height: 28px; margin-left: 41px; }
.s-batt { width: 52px; height: 26px; margin-left: 40px; }
.s-wifi { width: 32px; height: 25px; margin-left: 36px; margin-top: -4px; }
.s-app { width: 30px; height: 24px; margin-left: 39px; }
.s-search { width: 26px; height: 26px; margin-left: 40px; }
.s-toggles { width: 28px; height: 26px; margin-left: 27px; }
.s-dot { width: 9px; height: 9px; border-radius: 50%; background: #d8793f; margin: 3px 0 0 11px; }
.s-siri { width: 28px; height: 28px; margin-left: 24px; }
.clock { margin-left: 32px; letter-spacing: -.35px; -webkit-text-stroke: .3px currentColor; }

/* Windows behind the browser */
.back-window { position: absolute; left: 2200px; top: 50px; border-radius: 0 20px 20px 0; }
.back-window-far { width: 357px; height: 1440px; background: #9b9b9b; }
.back-window-near { width: 360px; height: 1412px; border-radius: 0 24px 20px 0; background: linear-gradient(#dcdce0 0, #dcdce0 103px, #b5b5b8 104px, #d3d3d3 108px, #cfcfcf 100%); }
.video-tile {
  position: absolute;
  left: 2429px;
  top: 1536px;
  width: 118px;
  height: 80px;
  border: 5px solid #dcdcdf;
  background: #2b2933;
  color: #d8d8de;
  display: flex;
  flex-direction: column;
  align-items: flex-end;
  padding: 3px 5px;
  white-space: nowrap;
}
.video-tile small { font-size: 4px; line-height: 5px; color: #94939b; }
.video-tile span { font-size: 7px; line-height: 10px; margin: 13px 12px 0 0; }

/* Browser window */
.window {
  position: relative;
  width: 2546px;
  height: 1442px;
  flex: none;
  display: flex;
  flex-direction: column;
  border-radius: 20px;
  overflow: hidden;
  background: #ffaebc;
}
.tabstrip { height: 80px; flex: none; display: flex; align-items: center; border-top: 2px solid #ffd3da; padding-left: 42px; }
.lights { display: flex; gap: 16px; width: 136px; }
.lights i { width: 24px; height: 24px; border-radius: 50%; border: 1px solid rgba(0, 0, 0, .12); }
.red { background: #ff5f57; }
.amber { background: #febc2e; }
.green { background: #28c840; }
.tabs { display: flex; align-items: center; height: 78px; }
.tab { position: relative; width: 72px; height: 32px; margin-bottom: 2px; display: flex; align-items: center; justify-content: center; border-right: 4px solid #ffdfe4; transform: translateX(2px); }
.narrow { width: 70px; }
.last { border-right-color: transparent; }
.asleep::before {
  content: "";
  position: absolute;
  left: 14px;
  top: -4px;
  width: 40px;
  height: 40px;
  border-radius: 50%;
  background: conic-gradient(#8b6a73 0 28deg, transparent 28deg 42deg, #8b6a73 42deg 68deg, transparent 68deg 80deg, #8b6a73 80deg 112deg, transparent 112deg 124deg, #8b6a73 124deg 150deg, transparent 150deg 162deg, #8b6a73 162deg 188deg, transparent 188deg 196deg, #8b6a73 196deg 346deg, transparent 346deg);
  -webkit-mask: radial-gradient(circle, transparent 17px, #000 17.500px);
  mask: radial-gradient(circle, transparent 17px, #000 17.500px);
}
.narrow.asleep::before { left: 13px; }
.f24 { width: 24px; height: 24px; }
.f26 { width: 26px; height: 26px; }
.f28 { width: 28px; height: 28px; }
.f30 { width: 30px; height: 24px; }
.f32 { width: 32px; height: 32px; }
.count { font-size: 14px; letter-spacing: -.8px; text-anchor: middle; fill: #111; }
.llm { font-size: 6px; font-weight: 700; text-anchor: middle; fill: #222; }
.tab-active {
  position: relative;
  width: 64px;
  height: 68px;
  align-self: flex-end;
  margin-left: 4px;
  border-radius: 20px 20px 0 0;
  background: #ffdfe4;
  display: flex;
  align-items: center;
  justify-content: center;
  padding-bottom: 12px;
}
.tab-active::before, .tab-active::after { content: ""; position: absolute; bottom: 0; width: 20px; height: 20px; }
.tab-active::before { left: -20px; background: radial-gradient(circle at 0 0, transparent 19.500px, #ffdfe4 20px); }
.tab-active::after { right: -20px; background: radial-gradient(circle at 100% 0, transparent 19.500px, #ffdfe4 20px); }
.close { width: 16px; height: 16px; }
.after-active { width: 72px; margin-left: 4px; padding-left: 4px; }
.new-tab { width: 20px; height: 20px; margin: 0 0 2px 24px; }
.tab-search { width: 56px; height: 56px; border-radius: 19px; background: #ffdfe4; margin: 0 12px 2px auto; display: flex; align-items: center; justify-content: center; }
.chevron { width: 18px; height: 12px; }

.toolbar { height: 94px; flex: none; display: flex; align-items: center; padding-left: 32px; background: #ffdfe4; border-bottom: 2px solid #cfb3b9; border-radius: 20px 20px 0 0; }
.nav-btn { width: 26px; height: 24px; color: #a38b90; }
.forward { transform: scaleX(-1); margin-left: 45px; }
.reload { height: 26px; margin-left: 46px; }
.omnibox { width: 1662px; height: 68px; border-radius: 34px; margin-left: 39px; padding-left: 10px; background: #e1c5c9; display: flex; align-items: center; color: #202124; font-size: 27.500px; }
.chip { width: 106px; height: 48px; border-radius: 24px; background: #ffdfe4; display: flex; align-items: center; padding-left: 11px; gap: 12px; font-size: 26px; letter-spacing: -.5px; -webkit-text-stroke: .4px currentColor; }
.chip-icon { width: 26px; height: 26px; }
.url { margin-left: 16px; width: 1404px; white-space: nowrap; letter-spacing: .03px; }
.o-zoom { width: 28px; height: 28px; }
.o-star { width: 30px; height: 29px; margin-left: 35px; }
.extensions { display: flex; margin-left: 36px; gap: 40px; }
.ext { width: 32px; height: 32px; }
.ext:last-child { transform: translateX(1px); }
.js-s { font: italic 700 24px "Liberation Serif", serif; text-anchor: middle; fill: #f3f04a; }
.js-dollar { font-size: 9px; font-weight: 700; text-anchor: middle; fill: #dcd93a; }
.tool-sep { width: 4px; height: 32px; border-radius: 2px; background: #ffaebc; margin-left: 36px; }
.avatar { width: 40px; height: 40px; border-radius: 50%; background: #1698a7; color: #fff; font-size: 20px; display: flex; align-items: center; justify-content: center; margin-left: 32px; }
.error-pill { width: 140px; height: 68px; border-radius: 34px; background: #ffaebc; margin-left: 24px; padding-left: 24px; display: flex; align-items: center; font-size: 26px; color: #202124; letter-spacing: -.2px; }
.dots { width: 6px; height: 6px; border-radius: 50%; background: #202124; box-shadow: 0 -11px #202124, 0 11px #202124; margin-left: auto; margin-right: 29px; }

/* Page */
.page { position: relative; flex: 1; padding-top: 41px; background: linear-gradient(135deg, #f9fafc, #f3f4f6); }
.page::after {
  content: "";
  position: absolute;
  left: 0;
  right: 0;
  bottom: 0;
  height: 76px;
  background: linear-gradient(transparent, rgba(0, 0, 0, .03) 50%, rgba(0, 0, 0, .1));
  -webkit-mask: linear-gradient(90deg, transparent 20px, #000 240px, #000 2330px, transparent 2530px);
  mask: linear-gradient(90deg, transparent 20px, #000 240px, #000 2330px, transparent 2530px);
}
.card { width: 670px; margin: 0 auto; padding: 32px; border-radius: 12px; background: #fff; color: #374151; font-size: 14px; line-height: 20px; letter-spacing: -.18px; box-shadow: 0 10px 15px -3px rgba(0, 0, 0, .1), 0 4px 6px -4px rgba(0, 0, 0, .1); }
.logo { display: flex; height: 24px; color: #000; font-size: 16px; line-height: 24px; letter-spacing: -.4px; }
.broken { width: 16px; height: 16px; }
h1 { margin-top: 24px; font-size: 30px; line-height: 36px; letter-spacing: -.78px; color: #1f2937; white-space: nowrap; }
.intro { margin-top: 32px; padding: 16px 0 16px 16px; border-left: 4px solid #e84b98; border-radius: 0 8px 8px 0; background: #fcf1f7; white-space: nowrap; }
h2, h3 { font-size: 16px; line-height: 24px; font-weight: 600; }
h3 { color: #1f2937; margin-bottom: 8px; letter-spacing: 0; }
.with-icon { display: flex; align-items: center; gap: 10px; padding-left: 2px; letter-spacing: -.2px; }
.with-icon svg { width: 16px; height: 16px; }
.guide { margin-top: 32px; padding: 16px; border: 1px solid #e5e7eb; border-radius: 8px; background: #f9fafb; }
.guide dl { display: grid; grid-template-columns: 48px 1fr; gap: 4px 16px; margin-top: 8px; }
dt { color: #d92d77; font-weight: 500; letter-spacing: .1px; }
dd { color: #4b5563; }
.thanks { margin-top: 32px; padding: 16px; border: 1px solid #bbf7d0; border-radius: 8px; background: #f1fcf4; color: #1c8040; }
.thanks p { margin-top: 4px; color: #22a04c; }
.stats { display: grid; grid-template-columns: 1fr 1fr; gap: 16px; margin-top: 24px; }
.stat { height: 118px; padding: 16px; border: 1px solid #e5e7eb; border-radius: 8px; background: #fff; box-shadow: 0 1px 2px rgba(0, 0, 0, .05); }
.score { padding-top: 1px; font-size: 24px; line-height: 31px; font-weight: 700; letter-spacing: .1px; color: #d92d77; }
.percent { color: #4b5563; }
.date { font-size: 20px; line-height: 28px; letter-spacing: -.55px; }
.interpretation { margin-top: 24px; padding: 24px; border: 1px solid #e5e7eb; border-radius: 8px; background: #f9fafb; }
.interpretation h2 { font-size: 18px; line-height: 28px; color: #1f2937; margin-bottom: 12px; letter-spacing: .1px; }
.level { font-weight: 500; margin-bottom: 16px; letter-spacing: -.03px; }
.cta { margin-top: 24px; padding: 24px 0; border: 1px solid #f8d0e6; border-radius: 8px; background: #fcf1f7; display: flex; flex-direction: column; align-items: center; gap: 16px; font-size: 16px; line-height: 24px; font-weight: 500; letter-spacing: -.23px; }
.book { width: 512px; height: 48px; line-height: 48px; border-radius: 8px; background: #d92d77; color: #fff; font-weight: 600; letter-spacing: -.37px; text-align: center; white-space: nowrap; box-shadow: 0 4px 6px -1px rgba(0, 0, 0, .1), 0 2px 4px -2px rgba(0, 0, 0, .1); }
.actions { display: flex; gap: 12px; margin-top: 24px; }
.btn { height: 42px; display: flex; align-items: center; justify-content: center; border-radius: 8px; font-size: 16px; font-weight: 500; letter-spacing: -.1px; box-shadow: 0 1px 2px rgba(0, 0, 0, .08); }
.download { width: 298px; border: 1px solid #d92d77; color: #d92d77; gap: 11px; letter-spacing: -.33px; }
.download svg { width: 14px; height: 16px; margin-top: -1px; }
.restart { width: 296px; background: #e5e7eb; }

/* Dock */
.dock {
  position: relative;
  width: 2443px;
  height: 94px;
  margin: 4px 0 0 58px;
  padding: 0 0 6px 13px;
  border: 2px solid rgba(255, 255, 255, .17);
  border-radius: 38px;
  display: flex;
  align-items: center;
  background: linear-gradient(90deg, #5f5478 0, #605572 600px, #655890 1000px, #66568f 1350px, #8f55b0 1560px, #9454b6 1680px, #8a55ad 1850px, #675389 2150px, #655588 2300px, #746887 2443px);
}
.app { position: relative; width: 58px; height: 58px; margin-right: 18px; border-radius: 13px; flex: none; box-shadow: 0 1px 3px rgba(0, 0, 0, .25); }
.app svg { width: 58px; height: 58px; }
.app .contacts { width: 60px; }
.app .inset { width: 46px; height: 46px; margin: 6px; position: absolute; }
.app .textedit { width: 64px; height: 72px; margin-top: -7px; }
.nudge { margin-left: 2px; }
.running::after { content: ""; position: absolute; left: 25px; top: 67px; width: 8px; height: 8px; border-radius: 50%; background: #06021c; }
.cal-month { font-size: 11.500px; font-weight: 600; text-anchor: middle; fill: #fff; }
.cal-day { font-size: 35px; font-weight: 300; text-anchor: middle; fill: #2a2a2a; }
.tv { font-size: 25px; font-weight: 500; letter-spacing: -1px; fill: #fff; }
.office { font-size: 16.500px; font-weight: 700; text-anchor: middle; fill: #fff; }
.bg-mail { background: linear-gradient(#2170ee, #2cc4fb); }
.bg-green { background: linear-gradient(#5ff177, #22bf3a); }
.bg-fox { background: #1f1236; }
.bg-white { background: #fcfcfc; }
.bg-paper { background: linear-gradient(#f5f5f3, #e8e6e1); }
.bg-music { background: linear-gradient(#fc5c74, #fa233b); }
.bg-tv { background: linear-gradient(#28332f, #0d1213); color: #fff; }
.bg-podcast { background: linear-gradient(#c663f0, #7d2eb8); }
.bg-store { background: linear-gradient(#23b5f5, #1d66e4); }
.bg-settings { background: linear-gradient(#c7d3d8, #8b8b8b); }
.bg-acrobat { background: #b01010; }
.badge { position: absolute; left: 38px; top: -8px; width: 27px; height: 27px; border-radius: 50%; background: #f93c40; color: #fff; font-size: 17px; font-weight: 400; line-height: 27px; text-align: center; }
.divider { width: 2px; height: 70px; background: #46196f; margin: 6px 25px 0 7px; }
.divider-two { margin: 6px 18px 0 9px; }
.thumb { position: relative; width: 68px; height: 38px; background: #e6e6e6; }
.second { margin-left: 10px; }
.thumb i { display: block; }
.ribbon { height: 9px; background: repeating-linear-gradient(90deg, #f4f1f2 0 4px, #d3c8cd 4px 5px); border-bottom: 2px solid #f3e3bd; border-top: 2px solid #e9d6dd; }
.sheet { width: 32px; height: 29px; margin-left: 18px; background: linear-gradient(#fff 14px, transparent 14px), repeating-linear-gradient(#fff 0 3px, #bbb 3px 4px); }
.filled { background: repeating-linear-gradient(#fff 0 2px, #c4c8d0 2px 3px); }
.dark { background: #3a3a3c; margin-left: 8px; }
.bar { height: 5px; background: #1e1e20; border-bottom: 1px solid #5c6066; }
.logo-dot { width: 6px; height: 6px; border-radius: 50%; background: #e8e8e8; margin: 5px 0 0 31px; box-shadow: 0 9px 0 -2px #777; }
.thumb-app { position: absolute; left: 45px; top: 30px; width: 21px; height: 21px; border-radius: 5px; background: #fcfcfc; }
.thumb-app svg { width: 21px; height: 21px; }
.trash { width: 52px; height: 68px; margin: -4px 0 0 16px; }
```
